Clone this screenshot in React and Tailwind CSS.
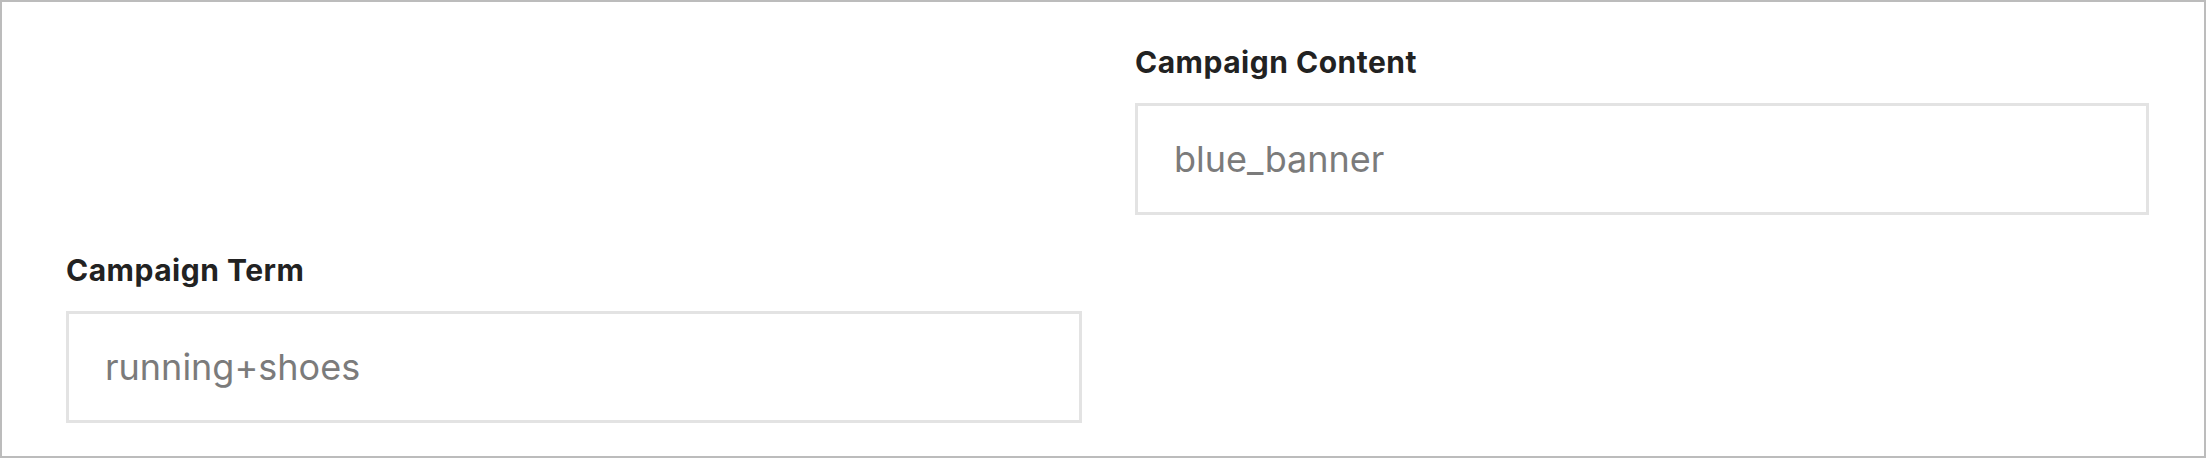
const Field = ({ label, value }) => (
  <div className="flex flex-col">
    <label className="text-[30px] leading-[34px] font-bold tracking-[0.5px] text-[#222222]">{label}</label>
    <div className="mt-[24px] h-[112px] border-[3px] border-[#e3e3e3] bg-white flex items-center pl-[36px]">
      <span className="text-[36px] text-[#7b7b7b]">{value}</span>
    </div>
  </div>
);

export default function App() {
  return (
    <div
      className="w-[2206px] h-[458px] border-2 border-[#bcbcbc] bg-white pl-[64px] pt-[43px]"
      style={{ fontFamily: "Inter, 'Noto Sans', sans-serif" }}
    >
      <div className="grid grid-cols-[1016px_1014px] gap-x-[53px] gap-y-[38px]">
        <div />
        <Field label="Campaign Content" value="blue_banner" />
        <Field label="Campaign Term" value="running+shoes" />
        <div />
      </div>
    </div>
  );
}
